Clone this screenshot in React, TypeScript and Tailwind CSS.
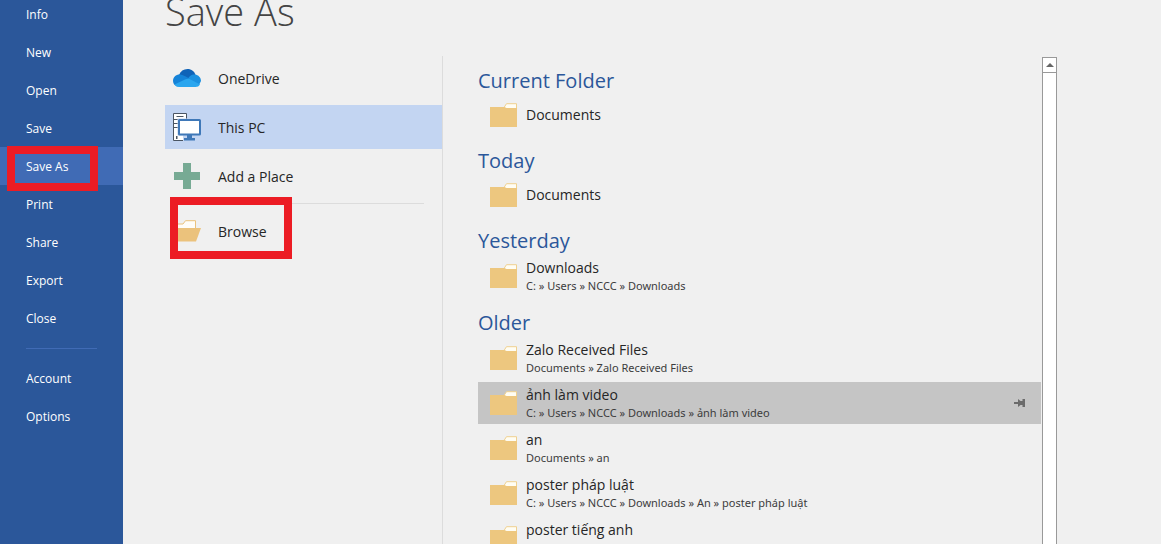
import { clsx } from 'clsx';

const menuItems = ['Info', 'New', 'Open', 'Save', 'Save As', 'Print', 'Share', 'Export', 'Close'];
const footerItems = ['Account', 'Options'];

type Folder = { name: string; path?: string; active?: boolean };

const groups: { title: string; folders: Folder[] }[] = [
  { title: 'Current Folder', folders: [{ name: 'Documents' }] },
  { title: 'Today', folders: [{ name: 'Documents' }] },
  { title: 'Yesterday', folders: [{ name: 'Downloads', path: 'C: » Users » NCCC » Downloads' }] },
  {
    title: 'Older',
    folders: [
      { name: 'Zalo Received Files', path: 'Documents » Zalo Received Files' },
      { name: 'ảnh làm video', path: 'C: » Users » NCCC » Downloads » ảnh làm video', active: true },
      { name: 'an', path: 'Documents » an' },
      { name: 'poster pháp luật', path: 'C: » Users » NCCC » Downloads » An » poster pháp luật' },
      { name: 'poster tiếng anh', path: '' },
    ],
  },
];

const OneDriveIcon = () => (
  <svg width="28" height="18" viewBox="0 0 28 18">
    <path d="M6 6C7.500 2 10.500 0 14.500 0C18.500 0 21.500 2.500 22.500 6L18 12L6 8Z" fill="#0f63b8" />
    <path d="M0 12C0 8 3 5.500 6.500 5.500C9 5.500 11 6.500 17 10L5 17.500C2 17 0 15 0 12Z" fill="#1583d8" />
    <path d="M15 9.500C17 6 19.500 5 22 5.500C25.500 6 28 8.500 28 12L26 16L15 11Z" fill="#1b90e0" />
    <path d="M1.500 15.500L12 10.500C14.500 9.300 16 9.500 18 10.700L27 15.500C26 17.200 24.500 18 22.500 18H6C4 18 2.500 17.200 1.500 15.500Z" fill="#2aa6ef" />
  </svg>
);

const PcIcon = () => (
  <svg width="28" height="28" viewBox="0 0 28 28">
    <path d="M.5 .5H13.500V27.500H.5Z" fill="#fff" stroke="#4a5563" />
    <path d="M3.500 3.500H10.500M1 6.500H5M1 10.500H5M1 14.500H5" stroke="#4a5563" />
    <path d="M3 23H4.500V26H3Z" fill="#4a5563" />
    <path d="M4.500 5.500H28V22.500H18.500V28H10V22.500H4.500Z" fill="#c3d5f2" />
    <rect x="6" y="7" width="21" height="14.500" rx=".5" fill="#fff" stroke="#3f78b8" strokeWidth="2" />
    <path d="M14 22H19V25H22V27.500H11V25H14Z" fill="#3f78b8" />
  </svg>
);

const PlusIcon = () => (
  <svg width="26" height="26" viewBox="0 0 26 26">
    <path d="M9 0H17V9H26V17H17V26H9V17H0V9H9Z" fill="#77aa94" />
  </svg>
);

const OpenFolderIcon = () => (
  <svg width="28" height="22" viewBox="0 0 28 22">
    <path d="M.5 21V4H10L12.500 .7H22.500V8" fill="#fffdf8" stroke="#ebc27c" />
    <path d="M5 8H28L23 21.500H0Z" fill="#ebc27c" />
  </svg>
);

const FolderIcon = () => (
  <svg width="28" height="24" viewBox="0 0 28 24" className="shrink-0">
    <path d="M14 4.500L16.500 .7H26.500V6H14Z" fill="#fffdf3" stroke="#efd08f" />
    <path d="M0 4H14.500L16.500 5H27V24H0Z" fill="#edc77f" />
  </svg>
);

const PinIcon = () => (
  <svg width="12" height="10" viewBox="0 0 12 10">
    <path d="M0 4H4V1L6.500 3H8.500V1H11V9H8.500V7H6.500L4 9V6H0Z" fill="#6b6b6b" />
  </svg>
);

const places = [
  { label: 'OneDrive', icon: <OneDriveIcon /> },
  { label: 'This PC', icon: <PcIcon />, active: true },
  { label: 'Add a Place', icon: <PlusIcon /> },
];

const MenuButton = ({ label }: { label: string }) => {
  const active = label === 'Save As';
  return (
    <button className={clsx('relative block h-[38px] w-full pt-0.5 pl-[26px] text-left', active && 'bg-[#406bb5]')}>
      {label}
      {active && <span className="absolute -top-px left-[7px] h-[45px] w-[91px] border-8 border-[#ec1c24]" />}
    </button>
  );
};

const FolderRow = ({ name, path, active }: Folder) => (
  <button
    className={clsx(
      'flex w-full items-center gap-2 pr-[15px] pl-3 text-left',
      path === undefined ? 'h-10' : 'h-[42px]',
      active && 'bg-[#c5c5c5]',
    )}
  >
    <FolderIcon />
    <span className="min-w-0 flex-1 whitespace-nowrap">
      <span className="block text-sm leading-5 text-[#262626]">{name}</span>
      {path !== undefined && (
        <span className="block h-4 font-['Noto_Sans',sans-serif] text-[11px] leading-4 text-[#3c3c3c]">{path}</span>
      )}
    </span>
    {active && <PinIcon />}
  </button>
);

const App = () => {
  return (
    <div className="flex h-screen overflow-hidden bg-[#f0f0f0] font-['Open_Sans','Noto_Sans',sans-serif] text-[#262626]">
      <nav className="-mt-[5px] w-[123px] shrink-0 bg-[#2b579a] text-xs text-white">
        {menuItems.map((item) => (
          <MenuButton key={item} label={item} />
        ))}
        <hr className="mx-[26px] mt-[11px] mb-2.5 border-[#406bb5]" />
        {footerItems.map((item) => (
          <MenuButton key={item} label={item} />
        ))}
      </nav>

      <main className="-mt-4 flex min-w-0 flex-1 flex-col pr-[104px] pl-[42px]">
        <h1 className="h-[72px] shrink-0 text-[38px] leading-[54px] font-light text-[#444]">Save As</h1>

        <div className="flex min-h-0 flex-1">
          <section className="flex w-[278px] shrink-0 flex-col gap-[5px] border-r border-[#dcdcdc] text-sm">
            {places.map(({ label, icon, active }) => (
              <button key={label} className={clsx('flex h-11 shrink-0 items-center text-left', active && 'bg-[#c3d5f2]')}>
                <span className="flex w-[53px] justify-center pr-2.5">{icon}</span>
                <span className="pt-0.5">{label}</span>
              </button>
            ))}
            <hr className="mr-[18px] ml-2 border-[#dcdcdc]" />
            <button className="relative flex h-11 shrink-0 items-center text-left">
              <span className="flex w-[53px] justify-center pr-2.5">
                <OpenFolderIcon />
              </span>
              <span className="pt-0.5">Browse</span>
              <span className="absolute -top-3 left-[5px] h-[62px] w-[122px] border-8 border-[#ec1c24]" />
            </button>
          </section>

          <section className="flex min-w-0 flex-1 flex-col gap-3 overflow-hidden pt-[11px] pr-px pl-[35px]">
            {groups.map(({ title, folders }) => (
              <div key={title} className="shrink-0">
                <h2 className="text-xl leading-7 text-[#2b579a]">{title}</h2>
                <div className="flex flex-col gap-[3px]">
                  {folders.map((folder) => (
                    <FolderRow key={folder.name} {...folder} />
                  ))}
                </div>
              </div>
            ))}
          </section>

          <div className="mt-px w-[15px] shrink-0 border border-b-0 border-[#999] bg-white">
            <button aria-label="Scroll up" className="flex h-[15px] w-full items-center justify-center border-b border-[#999]">
              <svg width="8" height="4" viewBox="0 0 8 4">
                <path d="M0 4L4 0L8 4Z" fill="#666" />
              </svg>
            </button>
          </div>
        </div>
      </main>
    </div>
  );
};

export default App;
